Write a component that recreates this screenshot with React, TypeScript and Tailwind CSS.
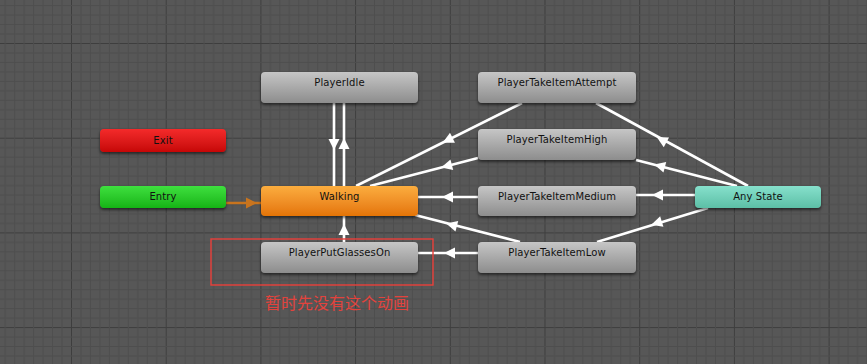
import React from 'react';

type Pt = [number, number];

type Transition = {
  from: Pt;
  to: Pt;
  at: Pt;
  color?: string;
};

// arrows point from source state to target state
const transitions: Transition[] = [
  { from: [334, 103], to: [334, 186], at: [334, 144] },
  { from: [344, 186], to: [344, 103], at: [344, 144] },
  { from: [344, 242], to: [344, 216], at: [344, 230] },
  { from: [522, 103], to: [356, 186], at: [448, 140] },
  { from: [478, 158], to: [370, 186], at: [447, 166] },
  { from: [478, 197], to: [418, 197], at: [448, 197] },
  { from: [520, 242], to: [415, 215], at: [452, 225] },
  { from: [478, 253], to: [418, 253], at: [450, 253] },
  { from: [748, 186], to: [596, 103], at: [662, 140] },
  { from: [737, 186], to: [636, 160], at: [660, 166] },
  { from: [695, 195], to: [636, 195], at: [658, 195] },
  { from: [708, 208], to: [597, 242], at: [657, 223] },
  { from: [226, 203], to: [261, 203], at: [251, 203], color: '#c8741e' },
];

type NodeDef = {
  name: string;
  box: string;
  tone: string;
  small?: boolean;
};

const grey = 'bg-gradient-to-b from-[#c6c6c6] to-[#8d8d8d]';

const nodes: NodeDef[] = [
  { name: 'Exit', box: 'left-[100px] top-[129px] w-[126px] h-[23px]', tone: 'bg-gradient-to-b from-[#f42a2a] to-[#c60606]', small: true },
  { name: 'Entry', box: 'left-[100px] top-[186px] w-[126px] h-[22px]', tone: 'bg-gradient-to-b from-[#3ee03e] to-[#14b414]', small: true },
  { name: 'Any State', box: 'left-[695px] top-[186px] w-[126px] h-[22px]', tone: 'bg-gradient-to-b from-[#86e0cc] to-[#5cbfa6]', small: true },
  { name: 'PlayerIdle', box: 'left-[261px] top-[72px] w-[157px] h-[31px]', tone: grey },
  { name: 'Walking', box: 'left-[261px] top-[186px] w-[157px] h-[30px]', tone: 'bg-gradient-to-b from-[#fbad3e] to-[#e47404]' },
  { name: 'PlayerPutGlassesOn', box: 'left-[261px] top-[242px] w-[157px] h-[31px]', tone: grey },
  { name: 'PlayerTakeItemAttempt', box: 'left-[478px] top-[72px] w-[158px] h-[31px]', tone: grey },
  { name: 'PlayerTakeItemHigh', box: 'left-[478px] top-[129px] w-[158px] h-[31px]', tone: grey },
  { name: 'PlayerTakeItemMedium', box: 'left-[478px] top-[186px] w-[158px] h-[30px]', tone: grey },
  { name: 'PlayerTakeItemLow', box: 'left-[478px] top-[242px] w-[158px] h-[31px]', tone: grey },
];

const Arrow = ({ t }: { t: Transition }) => {
  const dx = t.to[0] - t.from[0];
  const dy = t.to[1] - t.from[1];
  const angle = (Math.atan2(dy, dx) * 180) / Math.PI;
  const c = t.color ?? '#ffffff';
  return (
    <g>
      <line x1={t.from[0]} y1={t.from[1]} x2={t.to[0]} y2={t.to[1]} stroke={c} strokeWidth={2.6} />
      <polygon
        points="6,0 -5,-5.5 -5,5.5"
        fill={c}
        transform={`translate(${t.at[0]} ${t.at[1]}) rotate(${angle})`}
      />
    </g>
  );
};

const GridCanvas = () => {
  const step = 94.7;
  const minor = step / 10;
  return (
    <svg className="absolute inset-0" width={867} height={364}>
      <defs>
        <pattern id="grid" x={71} y={43} width={step} height={step} patternUnits="userSpaceOnUse">
          {Array.from({ length: 10 }).map((_, i) => (
            <g key={i}>
              <line x1={i * minor + 0.5} y1={0} x2={i * minor + 0.5} y2={step} stroke={i === 0 ? '#3e3e3e' : '#4e4e4e'} strokeWidth={1} />
              <line x1={0} y1={i * minor + 0.5} x2={step} y2={i * minor + 0.5} stroke={i === 0 ? '#3e3e3e' : '#4e4e4e'} strokeWidth={1} />
            </g>
          ))}
        </pattern>
      </defs>
      <rect width={867} height={364} fill="#575757" />
      <rect width={867} height={364} fill="url(#grid)" />
      {transitions.map((t, i) => (
        <Arrow key={i} t={t} />
      ))}
    </svg>
  );
};

const StateNode = ({ n }: { n: NodeDef }) => (
  <div
    className={`absolute ${n.box} rounded-[4px] shadow-[0_2px_3px_rgba(0,0,0,0.55)] ${n.tone} text-[10px] leading-[12px] text-[#111111] text-center tracking-[0.1px] ${
      n.small ? 'flex items-center justify-center' : 'pt-[5px]'
    }`}
  >
    {n.name}
  </div>
);

export default function App() {
  return (
    <div className="relative w-[867px] h-[364px] overflow-hidden bg-[#575757] font-['DejaVu_Sans','Liberation_Sans',sans-serif]">
      <GridCanvas />
      {nodes.map(n => (
        <StateNode key={n.name} n={n} />
      ))}

      {/* hand-drawn note over the screenshot */}
      <svg className="absolute left-[210px] top-[238px]" width={225} height={49}>
        <rect x={1} y={1} width={222} height={46} fill="none" stroke="#ea3f3a" strokeWidth={1.4} />
      </svg>
      <div className="absolute left-[265px] top-[292px] text-[16px] leading-[20px] text-[#e2433d] font-['Noto_Sans_CJK_SC',sans-serif]">
        暂时先没有这个动画
      </div>
    </div>
  );
}
